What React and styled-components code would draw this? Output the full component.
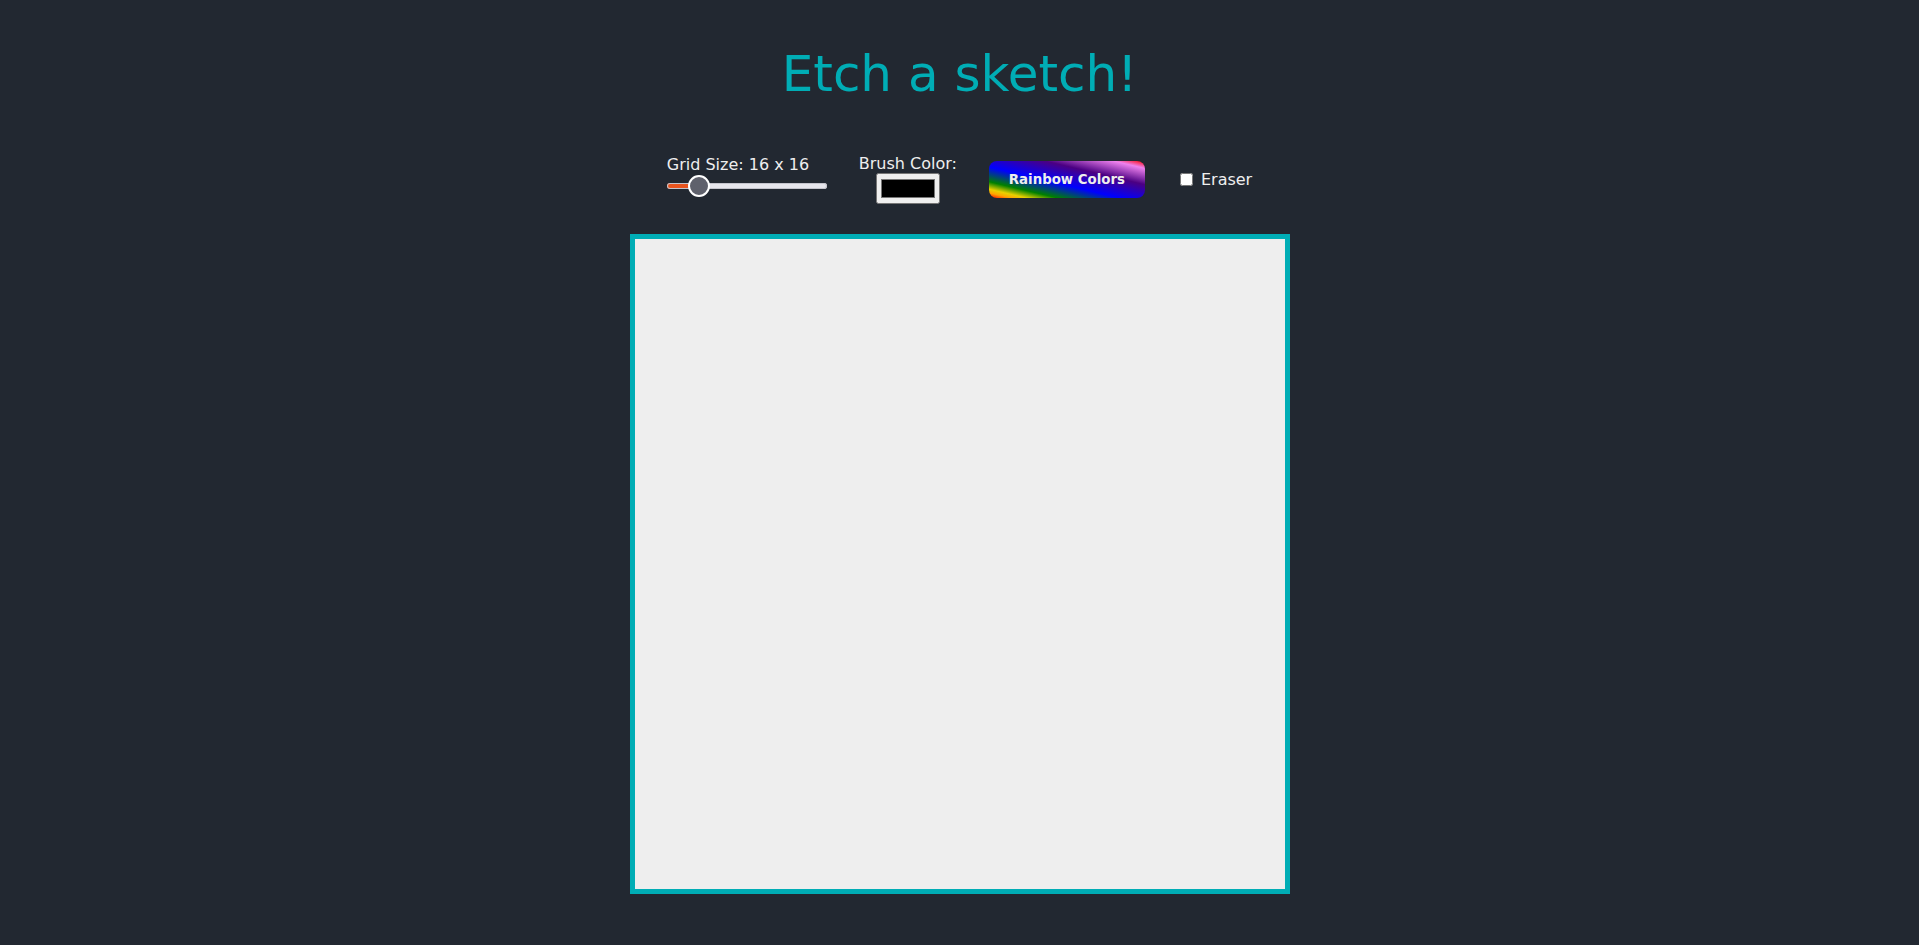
import React, { useState } from "react";
import styled, { createGlobalStyle } from "styled-components";

const GlobalStyle = createGlobalStyle`
    body {
        margin: 0;
        background-color: #222831;
        font-family: "DejaVu Sans", Verdana, sans-serif;
    }
`;

const Page = styled.div`
    min-height: 100vh;
    display: flex;
    flex-direction: column;
    align-items: center;
    padding-top: 45px;
    box-sizing: border-box;
`;

const Title = styled.h1`
    margin: 0;
    font-size: 50px;
    font-weight: normal;
    line-height: normal;
    color: #00adb5;
`;

const Controls = styled.div`
    margin-top: 51px;
    display: flex;
    align-items: center;
    gap: 32px;
`;

const ControlGroup = styled.div`
    display: flex;
    flex-direction: column;
    align-items: ${(p) => (p.$center ? "center" : "flex-start")};
`;

const Label = styled.label`
    color: #eeeeee;
    font-size: 16px;
    line-height: normal;
`;

const Slider = styled.input`
    -webkit-appearance: none;
    appearance: none;
    width: 160px;
    height: 22px;
    margin: 1px 0 6px 0;
    background: transparent;

    &::-webkit-slider-runnable-track {
        height: 6px;
        border-radius: 3px;
        background: linear-gradient(
            to right,
            #e8541e 0%,
            #e8541e ${(p) => p.$fill}%,
            #e6e6ec ${(p) => p.$fill}%,
            #e6e6ec 100%
        );
        box-shadow: inset 0 0 0 1px #c4c4cc;
    }

    &::-webkit-slider-thumb {
        -webkit-appearance: none;
        width: 22px;
        height: 22px;
        margin-top: -8px;
        border-radius: 50%;
        background: #5f616c;
        border: 2px solid #ffffff;
        box-sizing: border-box;
    }
`;

const ColorPicker = styled.input`
    width: 64px;
    height: 31px;
    margin: 0;
`;

const RainbowButton = styled.button`
    width: 156px;
    height: 37px;
    border: none;
    border-radius: 8px;
    font-family: "DejaVu Sans", Verdana, sans-serif;
    font-size: 13.333px;
    font-weight: bold;
    color: #eeeeee;
    cursor: pointer;
    background: linear-gradient(
        to top right,
        red 0%,
        orange 7%,
        #e8d000 12%,
        green 22%,
        blue 42%,
        indigo 68%,
        violet 90%,
        red 100%
    );
`;

const EraserLabel = styled.label`
    display: flex;
    align-items: center;
    color: #eeeeee;
    font-size: 16px;
    cursor: pointer;
`;

const CheckBox = styled.input`
    margin: 3px 8px 3px 3px;
`;

const Board = styled.div`
    margin-top: 30px;
    width: 650px;
    height: 650px;
    border: 5px solid #00adb5;
    background-color: #eeeeee;
    display: grid;
    grid-template-columns: repeat(${(p) => p.$size}, 1fr);
    grid-template-rows: repeat(${(p) => p.$size}, 1fr);
`;

const Cell = styled.div`
    background-color: #eeeeee;
`;

export default function App() {
    const [size, setSize] = useState(16);
    const [color, setColor] = useState("#000000");
    const [eraser, setEraser] = useState(false);

    // 썸 중심 위치에 맞춘 채움 비율
    const fill = ((11 + ((size - 1) / 99) * 138) / 160) * 100;

    return (
        <Page>
            <GlobalStyle />
            <Title>Etch a sketch!</Title>

            <Controls>
                <ControlGroup>
                    <Label htmlFor="grid-size">Grid Size: {size} x {size}</Label>
                    <Slider
                        id="grid-size"
                        type="range"
                        min="1"
                        max="100"
                        value={size}
                        $fill={fill}
                        onChange={(e) => setSize(Number(e.target.value))}
                    />
                </ControlGroup>

                <ControlGroup $center>
                    <Label htmlFor="brush-color">Brush Color:</Label>
                    <ColorPicker
                        id="brush-color"
                        type="color"
                        value={color}
                        onChange={(e) => setColor(e.target.value)}
                    />
                </ControlGroup>

                <RainbowButton>Rainbow Colors</RainbowButton>

                <EraserLabel>
                    <CheckBox
                        type="checkbox"
                        checked={eraser}
                        onChange={(e) => setEraser(e.target.checked)}
                    />
                    Eraser
                </EraserLabel>
            </Controls>

            <Board $size={size}>
                {Array.from({ length: size * size }).map((_, i) => (
                    <Cell key={i} />
                ))}
            </Board>
        </Page>
    );
}
